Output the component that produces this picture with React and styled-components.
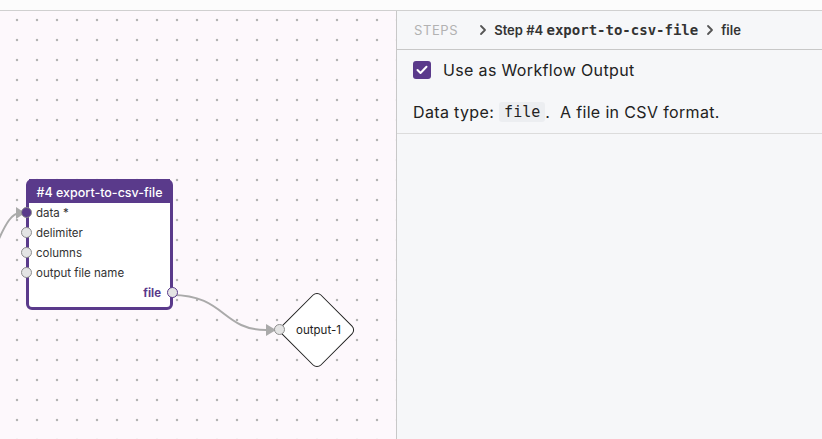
import styled, { createGlobalStyle } from "styled-components";

const Global = createGlobalStyle`
  html, body { margin: 0; padding: 0; }
  body {
    font-family: Inter, "Noto Sans", sans-serif;
    color: #222;
    background: #fff;
  }
`;

const Page = styled.div`
  width: 822px;
  height: 439px;
  display: flex;
  flex-direction: column;
  overflow: hidden;
`;

const TopStrip = styled.div`
  height: 10px;
  background: #fcfcfc;
  border-bottom: 1px solid #d0d0d0;
`;

const Main = styled.div`
  flex: 1;
  display: flex;
  min-height: 0;
`;

// WORKFLOW CANVAS
const Canvas = styled.div`
  position: relative;
  width: 396px;
  border-right: 1px solid #c8c8c8;
  background-color: #fdf8fc;
  background-image: radial-gradient(circle, #b4b4b4 1.4px, transparent 1.6px);
  background-size: 20px 20px;
  background-position: 7px -1px;
  overflow: hidden;
`;

const Edges = styled.svg`
  position: absolute;
  inset: 0;
  width: 100%;
  height: 100%;
  pointer-events: none;
`;

const Node = styled.div`
  position: absolute;
  left: ${(p) => p.x}px;
  top: ${(p) => p.y}px;
  width: 147px;
  height: 131px;
  box-sizing: border-box;
  border: 3px solid #5a3a8b;
  border-radius: 6px;
  background: #fff;
  display: flex;
  flex-direction: column;
`;

const NodeHeader = styled.div`
  height: 21px;
  background: #5a3a8b;
  color: #fff;
  font-size: 12.5px;
  font-weight: 500;
  display: flex;
  align-items: center;
  justify-content: center;
  margin-top: -3px;
  padding-top: 3px;
`;

const PortRow = styled.div`
  position: relative;
  height: 20px;
  display: flex;
  align-items: center;
  justify-content: ${(p) => (p.out ? "flex-end" : "flex-start")};
  padding: ${(p) => (p.out ? "0 9px 0 0" : "0 0 0 7px")};
  font-size: 11.5px;
  color: ${(p) => (p.out ? "#5a3a8b" : "#333")};
  font-weight: ${(p) => (p.out ? 700 : 400)};
`;

const Port = styled.span`
  position: absolute;
  top: 50%;
  ${(p) => (p.out ? "right: -8px;" : "left: -8px;")}
  width: 9px;
  height: 9px;
  margin-top: -6px;
  border-radius: 50%;
  border: 1.5px solid ${(p) => (p.out ? "#5a3a8b" : "#8e8e8e")};
  background: ${(p) => (p.filled ? "#5a3a8b" : "#e4e4e4")};
`;

const Diamond = styled.div`
  position: absolute;
  left: ${(p) => p.x}px;
  top: ${(p) => p.y}px;
  width: 76px;
  height: 76px;
  display: flex;
  align-items: center;
  justify-content: center;
  &::before {
    content: "";
    position: absolute;
    left: 10px;
    top: 10px;
    width: 56px;
    height: 56px;
    box-sizing: border-box;
    border: 1.5px solid #222;
    border-radius: 6px;
    background: #fff;
    transform: rotate(45deg);
  }
`;

const DiamondLabel = styled.span`
  position: relative;
  margin-left: 3px;
  font-size: 11.5px;
  color: #222;
`;

const DiamondPort = styled.span`
  position: absolute;
  left: -5px;
  top: 50%;
  width: 9px;
  height: 9px;
  margin-top: -6px;
  border-radius: 50%;
  border: 1.5px solid #8e8e8e;
  background: #e4e4e4;
`;

// RIGHT PANEL
const Panel = styled.div`
  flex: 1;
  background: #f6f7f9;
  display: flex;
  flex-direction: column;
`;

const Crumbs = styled.div`
  height: 38px;
  border-bottom: 1px solid #c8c8c8;
  display: flex;
  align-items: center;
  padding-left: 17px;
  font-size: 13px;
  font-weight: 600;
  color: #333;
`;

const CrumbRoot = styled.span`
  color: #b2b2b2;
  font-weight: 400;
  letter-spacing: 0.6px;
  margin-right: 18px;
`;

const Chevron = styled.svg`
  width: 10px;
  height: 12px;
  margin: 0 6px 0 ${(p) => p.gap || 2}px;
`;

const Mono = styled.span`
  font-family: "DejaVu Sans Mono", "Liberation Mono", monospace;
  font-size: 14px;
  font-weight: 700;
`;

const Body = styled.div`
  padding: 10px 16px 10px;
  border-bottom: 1px solid #dcdcdc;
  font-size: 16px;
  letter-spacing: 0.35px;
  color: #222;
`;

const CheckRow = styled.label`
  display: flex;
  align-items: center;
  gap: 12px;
  height: 20px;
`;

const Box = styled.span`
  width: 18px;
  height: 18px;
  border-radius: 3px;
  background: #5a3a8b;
  display: flex;
  align-items: center;
  justify-content: center;
`;

const Info = styled.p`
  margin: 21px 0 0;
  height: 22px;
  display: flex;
  align-items: center;
  white-space: pre;
`;

const Code = styled.span`
  font-family: "DejaVu Sans Mono", "Liberation Mono", monospace;
  font-size: 15px;
  letter-spacing: 0;
  background: #eceef1;
  border-radius: 3px;
  padding: 1px 5px;
  margin-left: 5px;
`;

const Caret = ({ gap }) => (
  <Chevron viewBox="0 0 10 12" gap={gap}>
    <path d="M3 2 L7 6 L3 10" fill="none" stroke="#555" strokeWidth="1.8" strokeLinecap="round" strokeLinejoin="round" />
  </Chevron>
);

const inputs = ["data", "delimiter", "columns", "output file name"];

const App = () => {
  return (
    <Page>
      <Global />
      <TopStrip />
      <Main>
        <Canvas>
          <Edges>
            <path d="M -2 230 C 6 212, 12 202, 20 202" fill="none" stroke="#aaa" strokeWidth="2" />
            <path d="M 16 196 L 25 202 L 16 208 Z" fill="#aaa" />
            <path d="M 172 284 C 225 284, 222 319, 266 319" fill="none" stroke="#aaa" strokeWidth="2" />
            <path d="M 266 313 L 276 319 L 266 325 Z" fill="#aaa" />
          </Edges>
          <Node x={26} y={168}>
            <NodeHeader>#4 export-to-csv-file</NodeHeader>
            {inputs.map((name, i) => (
              <PortRow key={name}>
                <Port filled={i === 0} />
                {name}
                {i === 0 && " *"}
              </PortRow>
            ))}
            <PortRow out>
              file
              <Port out />
            </PortRow>
          </Node>
          <Diamond x={279} y={281}>
            <DiamondPort />
            <DiamondLabel>output-1</DiamondLabel>
          </Diamond>
        </Canvas>
        <Panel>
          <Crumbs>
            <CrumbRoot>STEPS</CrumbRoot>
            <Caret />
            Step #4&nbsp;<Mono>export-to-csv-file</Mono>
            <Caret gap={7} />
            file
          </Crumbs>
          <Body>
            <CheckRow>
              <Box>
                <svg width="12" height="10" viewBox="0 0 12 10">
                  <path d="M1.5 5 L4.5 8 L10.5 1.8" fill="none" stroke="#fff" strokeWidth="2" strokeLinecap="round" strokeLinejoin="round" />
                </svg>
              </Box>
              Use as Workflow Output
            </CheckRow>
            <Info>
              Data type:<Code>file</Code>.  A file in CSV format.
            </Info>
          </Body>
        </Panel>
      </Main>
    </Page>
  );
};

export default App;
